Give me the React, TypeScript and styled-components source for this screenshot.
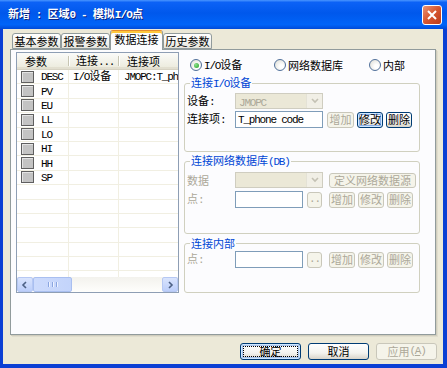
import React from 'react';
import styled, { createGlobalStyle } from 'styled-components';

const GlobalStyle = createGlobalStyle`
    html, body {
        margin: 0;
        padding: 0;
        background: #fff;
    }
    body {
        font-family: "Noto Sans CJK SC", "Liberation Sans", sans-serif;
        font-size: 11px;
        line-height: 13px;
        color: #000;
    }
    * { box-sizing: border-box; }
`;

// half-width runs in the old dialog font are narrow and fixed width
const Latin = styled.span<{ $bold?: boolean }>`
    font-family: "Liberation Mono", monospace;
    font-size: 11px;
    letter-spacing: ${p => (p.$bold ? -0.8 : -1.2)}px;
`;

function Txt({ children, bold }: { children: string; bold?: boolean }) {
    const parts = children.split(/([\x20-\x7e]+)/).filter(Boolean);
    return (
        <span>
            {parts.map((s, i) => (/^[\x20-\x7e]+$/.test(s) ? <Latin key={i} $bold={bold}>{s}</Latin> : s))}
        </span>
    );
}

const Window = styled.div`
    width: 447px;
    height: 368px;
    display: flex;
    flex-direction: column;
    overflow: hidden;
    background: #0a3ed6;
`;
const TitleBar = styled.div`
    height: 29px;
    flex: none;
    display: flex;
    align-items: center;
    justify-content: space-between;
    padding: 0 5px 0 8px;
    background: linear-gradient(#4a96ff 0%, #0c62f6 8%, #0058ec 45%, #0064f8 85%, #004ad8 100%);
`;
const TitleText = styled.span`
    color: #fff;
    font-weight: bold;
    font-size: 11px;
    white-space: pre;
    text-shadow: 1px 1px 0 #0b2480;
`;
const CloseButton = styled.div`
    width: 20px;
    height: 20px;
    border: 1px solid #fff;
    border-radius: 3px;
    display: flex;
    align-items: center;
    justify-content: center;
    background: linear-gradient(135deg, #ea9476 0%, #d6552f 50%, #b93b1c 100%);
`;
const Frame = styled.div`
    flex: 1;
    display: flex;
    flex-direction: column;
    background: #ece9d8;
    border-left: 3px solid #0b3fd4;
    border-right: 4px solid #0b3fd4;
    border-bottom: 4px solid #0b3fd4;
    padding: 1px 7px 4px;
`;
const TabStrip = styled.div`
    height: 20px;
    flex: none;
    display: flex;
    align-items: flex-end;
    padding-left: 2px;
    margin-bottom: -1px;
    position: relative;
    z-index: 1;
`;
const Tab = styled.div<{ $active?: boolean; $w: number }>`
    width: ${p => p.$w}px;
    height: ${p => (p.$active ? 20 : 16)}px;
    margin-bottom: ${p => (p.$active ? 0 : 1)}px;
    display: flex;
    align-items: center;
    justify-content: center;
    border: 1px solid #919b9c;
    border-bottom: ${p => (p.$active ? 'none' : '1px solid #919b9c')};
    border-top-color: ${p => (p.$active ? '#e68b2c' : '#919b9c')};
    border-radius: 3px 3px 0 0;
    background: ${p => (p.$active ? '#fcfcfe' : 'linear-gradient(#fff, #f4f3ee 60%, #e6e4da)')};
    box-shadow: ${p => (p.$active ? 'inset 0 2px 0 #ffc83c' : 'none')};
    padding-bottom: ${p => (p.$active ? 2 : 0)}px;
`;
const TabPage = styled.div`
    height: 286px;
    flex: none;
    display: flex;
    gap: 5px;
    padding: 2px 0 0 5px;
    background: #fcfcfe;
    border: 1px solid #919b9c;
    box-shadow: 1px 1px 0 #d0cdbd, 2px 2px 0 #e0ddcd;
`;

/* list view */
const ListView = styled.div`
    width: 163px;
    height: 241px;
    flex: none;
    display: flex;
    flex-direction: column;
    border: 1px solid #8e9eb4;
    background: #fff;
    overflow: hidden;
`;
const ListHeader = styled.div`
    height: 17px;
    flex: none;
    display: flex;
    background: linear-gradient(#fbfbf9, #ebeadb);
    border-bottom: 1px solid #d6d2c2;
    box-shadow: inset 0 -2px 0 #e2dfd0;
`;
const HeaderCell = styled.div<{ $w: number; $pl: number }>`
    width: ${p => p.$w}px;
    flex: none;
    position: relative;
    display: flex;
    align-items: center;
    padding-left: ${p => p.$pl}px;
    white-space: nowrap;
    &:not(:last-child)::after {
        content: '';
        position: absolute;
        right: 0;
        top: 3px;
        bottom: 3px;
        width: 1px;
        background: #c7c5b2;
        box-shadow: 1px 0 0 #fff;
    }
`;
const ListBody = styled.div`
    flex: 1;
    overflow: hidden;
`;
const Row = styled.div`
    width: 192px;
    height: 14.4px;
    display: flex;
    border-bottom: 1px solid #f1efe2;
`;
const Cell = styled.div<{ $w: number; $pl: number }>`
    width: ${p => p.$w}px;
    flex: none;
    display: flex;
    align-items: center;
    padding-left: ${p => p.$pl}px;
    border-right: 1px solid #f1efe2;
    white-space: nowrap;
    overflow: hidden;
`;
const StateBox = styled.span`
    width: 13px;
    height: 12px;
    flex: none;
    margin-right: 7px;
    border: 1px solid #5f5f5f;
    background: #c3c3c3;
    box-shadow: inset 1px 1px 0 #e4e4e4;
`;
const HScroll = styled.div`
    height: 15px;
    flex: none;
    display: flex;
    background: linear-gradient(#f3f2ed, #fefefc);
`;
const ScrollArrow = styled.div`
    width: 16px;
    height: 15px;
    display: flex;
    align-items: center;
    justify-content: center;
    border: 1px solid #b6c8f3;
    border-radius: 2px;
    background: linear-gradient(#d9e4fd, #bccefa);
`;
const ScrollThumb = styled.div<{ $w: number }>`
    width: ${p => p.$w}px;
    height: 15px;
    display: flex;
    align-items: center;
    justify-content: center;
    gap: 1px;
    border: 1px solid #a9bff0;
    border-radius: 2px;
    background: linear-gradient(90deg, #cddbfc, #c3d4fb);
    margin-right: auto;
`;
const Grip = styled.span`
    width: 1px;
    height: 5px;
    background: #8aa5e0;
    box-shadow: 1px 0 0 #eef3ff;
    margin: 0 1px;
`;

/* right side */
const RightPanel = styled.div`
    width: 236px;
    flex: none;
    display: flex;
    flex-direction: column;
`;
const RadioRow = styled.div`
    height: 20px;
    margin-top: 3px;
    margin-bottom: 1px;
    padding-left: 6px;
    display: grid;
    grid-template-columns: 84px 95px auto;
    align-items: center;
`;
const RadioItem = styled.label`
    display: flex;
    align-items: center;
    gap: 2px;
    white-space: nowrap;
`;
const RadioCircle = styled.span<{ $checked?: boolean }>`
    width: 12px;
    height: 12px;
    border-radius: 50%;
    border: 1px solid #50709a;
    background: radial-gradient(circle at 65% 65%, #fff 20%, #e4e3dc 80%);
    display: flex;
    align-items: center;
    justify-content: center;
    &::after {
        content: '';
        display: ${p => (p.$checked ? 'block' : 'none')};
        width: 5px;
        height: 5px;
        border-radius: 50%;
        background: radial-gradient(circle at 35% 35%, #8fe08f, #21a121);
    }
`;
const GroupBox = styled.fieldset<{ $h: number; $mt: number }>`
    margin: ${p => p.$mt}px 0 0;
    padding: 0 2px;
    height: ${p => p.$h}px;
    min-width: 0;
    border: 1px solid #d0d0bf;
    border-radius: 3px;
`;
const GroupTitle = styled.legend`
    margin-left: 3px;
    padding: 0 1px;
    color: #0046d5;
    line-height: 13px;
`;
const FieldRow = styled.div<{ $h: number; $mt: number }>`
    height: ${p => p.$h}px;
    margin-top: ${p => p.$mt}px;
    display: flex;
    align-items: center;
`;
const FieldLabel = styled.span<{ $disabled?: boolean }>`
    width: 48px;
    flex: none;
    color: ${p => (p.$disabled ? '#aca899' : '#000')};
    white-space: nowrap;
`;
const Combo = styled.div`
    width: 88px;
    height: 16px;
    flex: none;
    display: flex;
    border: 1px solid #cfcdc0;
    background: #ebe8d7;
`;
const ComboText = styled.span`
    flex: 1;
    padding-left: 3px;
    color: #aca899;
    line-height: 14px;
`;
const ComboArrow = styled.span`
    width: 16px;
    display: flex;
    align-items: center;
    justify-content: center;
    background: #f1efe6;
    border-left: 1px solid #e4e2d6;
`;
const TextBox = styled.div<{ $w: number }>`
    width: ${p => p.$w}px;
    height: 17px;
    flex: none;
    padding: 0 2px;
    display: flex;
    align-items: center;
    white-space: nowrap;
    overflow: hidden;
    border: 1px solid #7f9db9;
    background: #fff;
`;
const Button = styled.button<{ $w: number; $h?: number; $ml?: number; $look?: 'normal' | 'disabled' | 'focus' | 'default' }>`
    width: ${p => p.$w}px;
    height: ${p => p.$h || 16}px;
    margin: 0 0 0 ${p => p.$ml || 0}px;
    padding: 0;
    flex: none;
    font: inherit;
    white-space: nowrap;
    display: flex;
    align-items: center;
    justify-content: center;
    border-radius: 3px;
    border: 1px solid ${p => (p.$look === 'disabled' ? '#c9c7ba' : '#003c74')};
    color: ${p => (p.$look === 'disabled' ? '#aca899' : '#000')};
    background: ${p => (p.$look === 'disabled' ? '#f5f4ea' : 'linear-gradient(#fff, #f3f3ef 60%, #d8d4ca)')};
    box-shadow: ${p =>
        p.$look === 'focus' ? 'inset 0 0 0 1px #cee7ff, inset 0 0 0 2px #89ade4'
        : p.$look === 'default' ? 'inset 0 0 0 1px #cee7ff, inset 0 0 0 2px #a9c4ec'
        : 'none'};
    outline: ${p => (p.$look === 'default' ? '1px dotted #000' : 'none')};
    outline-offset: -4px;
`;
const ButtonRow = styled.div`
    display: flex;
    justify-content: flex-end;
    gap: 7px;
    margin: 8px -1px 0 0;
`;

const Chevron = ({ dir, color }: { dir: 'down' | 'left' | 'right'; color: string }) => {
    const d = dir === 'down' ? 'M1 2 L4 5 L7 2' : dir === 'left' ? 'M5 1 L2 4 L5 7' : 'M3 1 L6 4 L3 7';
    return (
        <svg width="8" height="8" viewBox="0 0 8 8">
            <path d={d} fill="none" stroke={color} strokeWidth="1.6" />
        </svg>
    );
};

const rows = [
    { name: 'DESC', link: 'I/O设备', item: 'JMOPC:T_phone code' },
    { name: 'PV' }, { name: 'EU' }, { name: 'LL' }, { name: 'LO' },
    { name: 'HI' }, { name: 'HH' }, { name: 'SP' },
];

export default function App() {
    const blanks = Array.from({ length: 8 }, (_, i) => i);

    return (
        <>
            <GlobalStyle />
            <Window>
                <TitleBar>
                    <TitleText><Txt bold>新增 : 区域0 - 模拟I/O点</Txt></TitleText>
                    <CloseButton>
                        <svg width="10" height="10" viewBox="0 0 10 10">
                            <path d="M1 1 L9 9 M9 1 L1 9" stroke="#fff" strokeWidth="2" />
                        </svg>
                    </CloseButton>
                </TitleBar>
                <Frame>
                    <TabStrip>
                        <Tab $w={49}>基本参数</Tab>
                        <Tab $w={49}>报警参数</Tab>
                        <Tab $w={53} $active>数据连接</Tab>
                        <Tab $w={49}>历史参数</Tab>
                    </TabStrip>
                    <TabPage>
                        <ListView>
                            <ListHeader>
                                <HeaderCell $w={52} $pl={8}>参数</HeaderCell>
                                <HeaderCell $w={50} $pl={7}><Txt>连接...</Txt></HeaderCell>
                                <HeaderCell $w={90} $pl={8}>连接项</HeaderCell>
                            </ListHeader>
                            <ListBody>
                                {rows.map(r => (
                                    <Row key={r.name}>
                                        <Cell $w={52} $pl={4}><StateBox /><Txt>{r.name}</Txt></Cell>
                                        <Cell $w={50} $pl={4}>{r.link && <Txt>{r.link}</Txt>}</Cell>
                                        <Cell $w={90} $pl={5}>{r.item && <Txt>{r.item}</Txt>}</Cell>
                                    </Row>
                                ))}
                                {blanks.map(i => (
                                    <Row key={i}>
                                        <Cell $w={52} $pl={0} />
                                        <Cell $w={50} $pl={0} />
                                        <Cell $w={90} $pl={0} />
                                    </Row>
                                ))}
                            </ListBody>
                            <HScroll>
                                <ScrollArrow><Chevron dir="left" color="#4d6185" /></ScrollArrow>
                                <ScrollThumb $w={39}><Grip /><Grip /><Grip /></ScrollThumb>
                                <ScrollArrow><Chevron dir="right" color="#4d6185" /></ScrollArrow>
                            </HScroll>
                        </ListView>

                        <RightPanel>
                            <RadioRow>
                                <RadioItem><RadioCircle $checked /><Txt>I/O设备</Txt></RadioItem>
                                <RadioItem><RadioCircle />网络数据库</RadioItem>
                                <RadioItem><RadioCircle />内部</RadioItem>
                            </RadioRow>

                            <GroupBox $h={76} $mt={0}>
                                <GroupTitle><Txt>连接I/O设备</Txt></GroupTitle>
                                <FieldRow $h={16} $mt={2}>
                                    <FieldLabel><Txt>设备:</Txt></FieldLabel>
                                    <Combo>
                                        <ComboText><Txt>JMOPC</Txt></ComboText>
                                        <ComboArrow><Chevron dir="down" color="#c4c1b4" /></ComboArrow>
                                    </Combo>
                                </FieldRow>
                                <FieldRow $h={17} $mt={2}>
                                    <FieldLabel><Txt>连接项:</Txt></FieldLabel>
                                    <TextBox $w={88}><Txt>T_phone code</Txt></TextBox>
                                    <Button $w={27} $ml={4} $look="disabled">增加</Button>
                                    <Button $w={26} $ml={3} $look="focus">修改</Button>
                                    <Button $w={26} $ml={3}>删除</Button>
                                </FieldRow>
                            </GroupBox>

                            <GroupBox $h={80} $mt={2}>
                                <GroupTitle><Txt>连接网络数据库(DB)</Txt></GroupTitle>
                                <FieldRow $h={16} $mt={3}>
                                    <FieldLabel $disabled>数据</FieldLabel>
                                    <Combo>
                                        <ComboText />
                                        <ComboArrow><Chevron dir="down" color="#c4c1b4" /></ComboArrow>
                                    </Combo>
                                    <Button $w={87} $h={15} $ml={6} $look="disabled">定义网络数据源</Button>
                                </FieldRow>
                                <FieldRow $h={17} $mt={3}>
                                    <FieldLabel $disabled><Txt>点:</Txt></FieldLabel>
                                    <TextBox $w={68} />
                                    <Button $w={15} $ml={4} $look="disabled"><Latin>..</Latin></Button>
                                    <Button $w={26} $ml={7} $look="disabled">增加</Button>
                                    <Button $w={26} $ml={3} $look="disabled">修改</Button>
                                    <Button $w={26} $ml={3} $look="disabled">删除</Button>
                                </FieldRow>
                            </GroupBox>

                            <GroupBox $h={56} $mt={3}>
                                <GroupTitle>连接内部</GroupTitle>
                                <FieldRow $h={17} $mt={1}>
                                    <FieldLabel $disabled><Txt>点:</Txt></FieldLabel>
                                    <TextBox $w={68} />
                                    <Button $w={15} $ml={4} $look="disabled"><Latin>..</Latin></Button>
                                    <Button $w={26} $ml={7} $look="disabled">增加</Button>
                                    <Button $w={26} $ml={3} $look="disabled">修改</Button>
                                    <Button $w={26} $ml={3} $look="disabled">删除</Button>
                                </FieldRow>
                            </GroupBox>
                        </RightPanel>
                    </TabPage>
                    <ButtonRow>
                        <Button $w={61} $h={17} $look="default">确定</Button>
                        <Button $w={61} $h={17}>取消</Button>
                        <Button $w={61} $h={17} $look="disabled">应用<Latin>(<u>A</u>)</Latin></Button>
                    </ButtonRow>
                </Frame>
            </Window>
        </>
    );
}
